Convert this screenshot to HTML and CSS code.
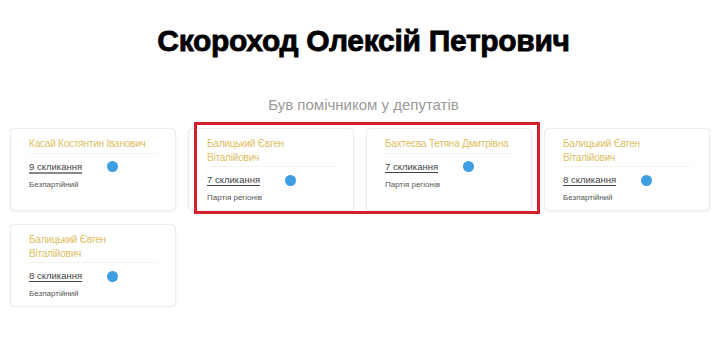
FILE: index.html
```html
<!DOCTYPE html>
<html>
<head>
    <title>Скороход Олексій Петрович</title>
    <link rel="stylesheet" href="styles.css">
</head>
<body>
    <h1 class="person-name">Скороход Олексій Петрович</h1>
    <h2 class="section-title">Був помічником у депутатів</h2>

    <div class="cards">
        <div class="card">
            <div class="card-name">Касай Костянтин Іванович</div>
            <div class="card-row">
                <a class="convocation visited" href="#">9 скликання</a>
                <span class="dot"></span>
            </div>
            <div class="party">Безпартійний</div>
        </div>
        <div class="card">
            <div class="card-name">Балицький Євген Віталійович</div>
            <div class="card-row">
                <a class="convocation" href="#">7 скликання</a>
                <span class="dot"></span>
            </div>
            <div class="party">Партія регіонів</div>
        </div>
        <div class="card">
            <div class="card-name">Бахтеєва Тетяна Дмитрівна</div>
            <div class="card-row">
                <a class="convocation" href="#">7 скликання</a>
                <span class="dot"></span>
            </div>
            <div class="party">Партія регіонів</div>
        </div>
        <div class="card">
            <div class="card-name">Балицький Євген Віталійович</div>
            <div class="card-row">
                <a class="convocation" href="#">8 скликання</a>
                <span class="dot"></span>
            </div>
            <div class="party">Безпартійний</div>
        </div>
        <div class="card">
            <div class="card-name">Балицький Євген Віталійович</div>
            <div class="card-row">
                <a class="convocation" href="#">8 скликання</a>
                <span class="dot"></span>
            </div>
            <div class="party">Безпартійний</div>
        </div>

        <!-- annotation frame over cards 2 and 3 -->
        <div class="highlight"></div>
    </div>
</body>
</html>
```

FILE: styles.css
```css
body {
    font-family: "Liberation Sans", Arial, sans-serif;
    margin: 0;
    background: #fff;
    color: #333;
}
.person-name {
    margin: 22px 0 0;
    text-align: center;
    font-size: 30px;
    line-height: 38px;
    font-weight: bold;
    color: #000;
    letter-spacing: -0.3px;
    -webkit-text-stroke: 0.8px #000;
}
.section-title {
    margin: 35px 0 0;
    text-align: center;
    font-size: 15px;
    line-height: 20px;
    font-weight: normal;
    color: #9a9a9a;
}
.cards {
    position: relative;
    display: grid;
    grid-template-columns: repeat(4, 166px);
    column-gap: 12px;
    row-gap: 13px;
    padding-left: 10px;
    margin-top: 13px;
}
.card {
    border: 1px solid #ececec;
    border-radius: 4px;
    box-shadow: 0 1px 3px rgba(0, 0, 0, 0.05);
    padding: 8px 18px 7px;
    background: #fff;
}
.card-name {
    font-size: 10px;
    line-height: 13.5px;
    letter-spacing: -0.2px;
    color: #dcc062;
    padding-bottom: 2px;
    border-bottom: 1px solid #f2f2f2;
}
.card-row {
    display: flex;
    align-items: center;
    margin-top: 6px;
    height: 14px;
}
.convocation {
    font-size: 9.5px;
    line-height: 14px;
    color: #444;
    text-decoration: underline;
    text-decoration-color: #444;
    text-underline-offset: 2px;
}
.convocation.visited {
    text-decoration-color: #888;
    text-decoration-thickness: 2px;
}
.dot {
    width: 11px;
    height: 11px;
    border-radius: 50%;
    background: #3d9fe2;
    margin-left: 25px;
}
.party {
    margin-top: 6px;
    font-size: 8px;
    line-height: 10px;
    color: #555;
}
.highlight {
    position: absolute;
    left: 194px;
    top: -6px;
    width: 340px;
    height: 86px;
    border: 3px solid #d3202f;
    pointer-events: none;
}
```
